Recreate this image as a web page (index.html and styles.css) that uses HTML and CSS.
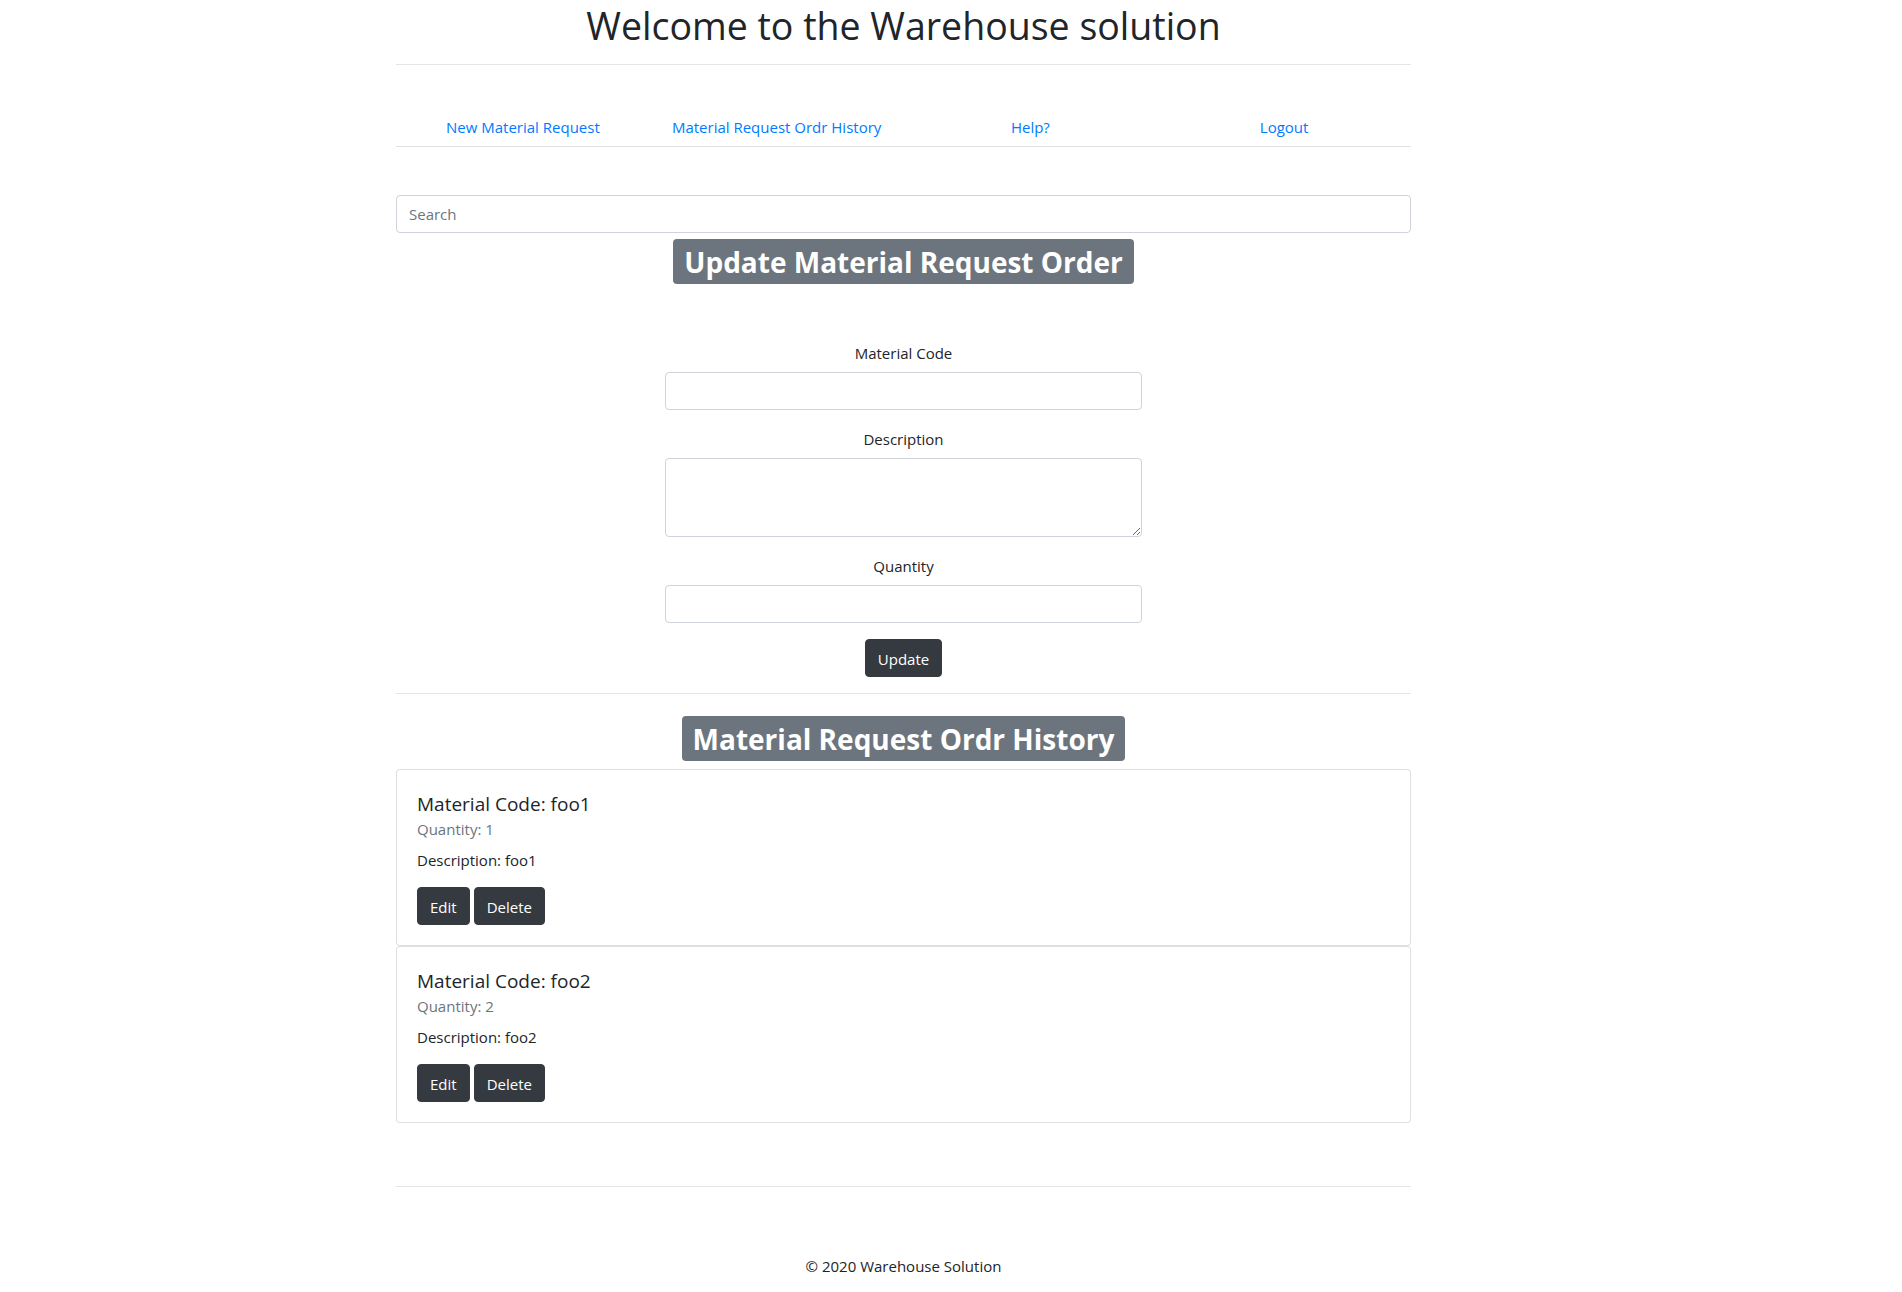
FILE: index.html
```html
<!DOCTYPE html>
<html lang="en">
<head>
<meta charset="utf-8">
<title>Warehouse solution</title>
<link rel="stylesheet" href="styles.css">
</head>
<body>
<div class="container">
  <h1 class="page-title">Welcome to the Warehouse solution</h1>
  <hr class="rule rule-top">
  <nav class="main-nav">
    <a class="nav-link" href="#">New Material Request</a>
    <a class="nav-link" href="#">Material Request Ordr History</a>
    <a class="nav-link" href="#">Help?</a>
    <a class="nav-link" href="#">Logout</a>
  </nav>
  <input class="search" type="text" placeholder="Search">
  <div class="section-head head-update"><span class="badge">Update Material Request Order</span></div>

  <form class="req-form">
    <div class="form-group">
      <label class="form-label">Material Code</label>
      <input class="form-control" type="text">
    </div>
    <div class="form-group">
      <label class="form-label">Description</label>
      <textarea class="form-control form-area"></textarea>
    </div>
    <div class="form-group">
      <label class="form-label">Quantity</label>
      <input class="form-control" type="text">
    </div>
    <div class="form-actions"><button class="btn" type="button">Update</button></div>
  </form>

  <hr class="rule rule-mid">
  <div class="section-head head-history"><span class="badge">Material Request Ordr History</span></div>

  <div class="card">
    <div class="card-body">
      <h5 class="card-title">Material Code: foo1</h5>
      <h6 class="card-subtitle">Quantity: 1</h6>
      <p class="card-text">Description: foo1</p>
      <div class="card-actions"><button class="btn" type="button">Edit</button> <button class="btn" type="button">Delete</button></div>
    </div>
  </div>
  <div class="card">
    <div class="card-body">
      <h5 class="card-title">Material Code: foo2</h5>
      <h6 class="card-subtitle">Quantity: 2</h6>
      <p class="card-text">Description: foo2</p>
      <div class="card-actions"><button class="btn" type="button">Edit</button> <button class="btn" type="button">Delete</button></div>
    </div>
  </div>

  <hr class="rule rule-foot">
  <footer class="footer">© 2020 Warehouse Solution</footer>
</div>
</body>
</html>
```
FILE: styles.css
```css
* { box-sizing: border-box; }
html, body { margin: 0; padding: 0; background: #fff; }
body {
  font-family: "Open Sans", "Noto Sans", sans-serif;
  font-size: 15px;
  line-height: 24px;
  color: #212529;
}
.container {
  width: 1015px;
  margin-left: 396px;
}
.page-title {
  margin: 0;
  padding-top: 4px;
  font-size: 37.5px;
  line-height: 44px;
  font-weight: 400;
  text-align: center;
  color: #212529;
}
.rule {
  border: 0;
  border-top: 1px solid rgba(0,0,0,.1);
  margin: 0;
  height: 0;
}
.rule-top { margin-top: 16px; }
.main-nav {
  margin-top: 41px;
  display: grid;
  grid-template-columns: repeat(4, 1fr);
  height: 41px;
  border-bottom: 1px solid #dee2e6;
}
.nav-link {
  display: block;
  text-align: center;
  padding: 9px 0 7px;
  color: #007bff;
  text-decoration: none;
  font-size: 15px;
  line-height: 24px;
}
.search {
  display: block;
  width: 100%;
  height: 38px;
  margin-top: 48px;
  padding: 6px 12px;
  font: inherit;
  font-size: 15px;
  color: #495057;
  border: 1px solid #ced4da;
  border-radius: 4px;
  background: #fff;
}
.search::placeholder { color: #6c757d; }
.section-head {
  text-align: center;
  height: 45px;
}
.head-update { margin-top: 6px; }
.badge {
  display: inline-block;
  background: #6c757d;
  color: #fff;
  font-weight: 700;
  font-size: 28px;
  line-height: 30px;
  padding: 8px 11px 7px;
  border-radius: 4px;
}
.req-form {
  width: 477px;
  margin: 56px auto 0;
}
.form-group { margin-bottom: 16px; }
.form-label {
  display: block;
  text-align: center;
  margin-bottom: 8px;
  line-height: 24px;
  padding-top: 1px;
  height: 24px;
}
.form-control {
  display: block;
  width: 100%;
  height: 38px;
  padding: 6px 12px;
  font: inherit;
  border: 1px solid #ced4da;
  border-radius: 4px;
  background: #fff;
  color: #495057;
}
.form-area { height: 79px; resize: vertical; }
.form-actions { text-align: center; }
.btn {
  display: inline-block;
  height: 38px;
  padding: 7px 12px 5px;
  font: inherit;
  font-size: 15px;
  line-height: 24px;
  color: #fff;
  background: #343a40;
  border: 1px solid #343a40;
  border-radius: 4px;
}
.rule-mid { margin-top: 16px; }
.head-history { margin-top: 22px; margin-bottom: 8px; }
.card {
  border: 1px solid rgba(0,0,0,.125);
  border-radius: 4px;
  background: #fff;
}
.card-body { padding: 20px; }
.card-title {
  margin: 0 0 6px;
  padding-top: 2px;
  height: 24px;
  font-size: 19px;
  line-height: 24px;
  font-weight: 400;
}
.card-subtitle {
  margin: 0 0 8px;
  font-size: 15px;
  line-height: 19px;
  font-weight: 400;
  color: #6c757d;
}
.card-text { margin: 0 0 16px; padding-top: 1px; height: 24px; }
.card-actions { font-size: 0; display: flex; gap: 4px; }
.rule-foot { margin-top: 63px; }
.footer {
  text-align: center;
  margin-top: 67px;
  line-height: 24px;
  padding-bottom: 15px;
}
```
